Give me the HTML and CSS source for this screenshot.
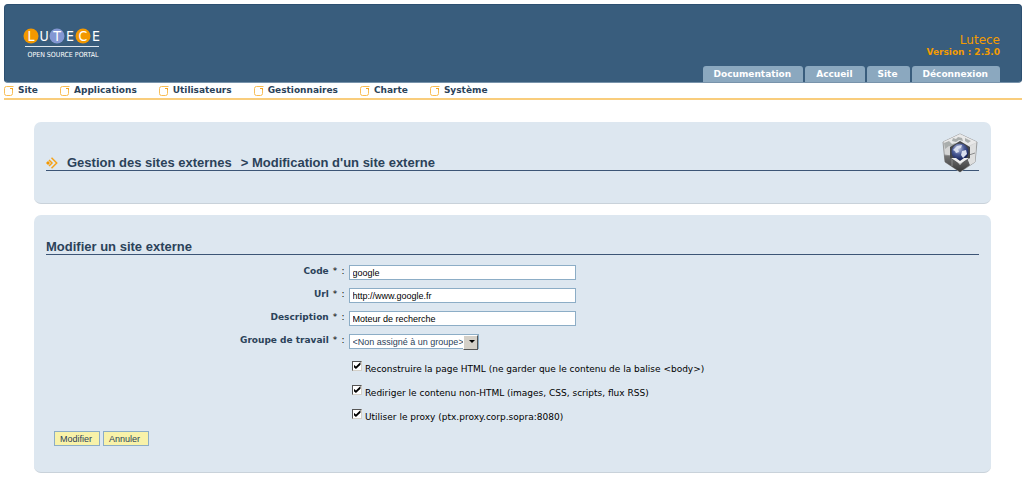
FILE: index.html
```
<!DOCTYPE html>
<html lang="fr">
<head>
  <meta charset="UTF-8">
  <title>Modification d'un site externe</title>
  <link rel="stylesheet" href="styles.css">
</head>
<body>

  <svg class="symbols" aria-hidden="true">
    <symbol id="bullet" viewBox="0 0 10 10">
      <path d="M8.500 4V7.500a2 2 0 0 1-2 2h-4a2 2 0 0 1-2-2v-5a2 2 0 0 1 2-2H9.500" fill="none" stroke="#f8bd55"/>
      <path d="M6 2h3v2H8V3H6z" fill="#f5a623"/>
    </symbol>
  </svg>

  <header class="header">
    <svg class="logo" width="78" height="32" viewBox="0 0 78 32" role="img" aria-label="Lutece Open Source Portal">
      <circle cx="8" cy="8" r="7.500" fill="#f39800"/>
      <circle cx="34" cy="8" r="7.500" fill="#8397d3"/>
      <circle cx="60" cy="8" r="7.500" fill="#f39800"/>
      <g class="logo-name">
        <text x="8" y="13">L</text>
        <text x="21" y="13">U</text>
        <text x="34" y="13">T</text>
        <text x="47" y="13">E</text>
        <text x="60" y="13">C</text>
        <text x="73" y="13">E</text>
      </g>
      <path d="M2 18.500H76" stroke="#dfe7ee"/>
      <text class="logo-tag" x="40" y="29">OPEN SOURCE PORTAL</text>
    </svg>
    <div class="header-right">
      <div class="product">Lutece</div>
      <div class="version">Version : 2.3.0</div>
      <nav class="tabs">
        <a href="#">Documentation</a>
        <a href="#">Accueil</a>
        <a href="#">Site</a>
        <a href="#">Déconnexion</a>
      </nav>
    </div>
  </header>

  <nav class="menu">
    <a href="#"><svg><use href="#bullet"/></svg>Site</a>
    <a href="#"><svg><use href="#bullet"/></svg>Applications</a>
    <a href="#"><svg><use href="#bullet"/></svg>Utilisateurs</a>
    <a href="#"><svg><use href="#bullet"/></svg>Gestionnaires</a>
    <a href="#"><svg><use href="#bullet"/></svg>Charte</a>
    <a href="#"><svg><use href="#bullet"/></svg>Système</a>
  </nav>

  <main>
    <section class="card card-title">
      <h1>
        <svg class="arrows" width="12" height="12" viewBox="0 0 12 12">
          <path d="M0 6l2-2 2 2-2 2z" fill="#f39800"/>
          <path d="M3 3l3 3-3 3M5.500 .8L10.700 6l-5.200 5.200" fill="none" stroke="#f5a31a" stroke-width="1.500"/>
        </svg>
        <a href="#">Gestion des sites externes</a>
        <span>&gt; Modification d'un site externe</span>
      </h1>
      <svg class="cube" width="38" height="42" viewBox="0 0 38 42">
        <defs>
          <linearGradient id="dark" x1="0" y1="0" x2="0" y2="1">
            <stop offset="0" stop-color="#777"/>
            <stop offset="1" stop-color="#383838"/>
          </linearGradient>
          <radialGradient id="globe" cx=".4" cy=".3" r=".7">
            <stop offset="0" stop-color="#c8cfe6"/>
            <stop offset=".5" stop-color="#4b5b96"/>
            <stop offset="1" stop-color="#141f55"/>
          </radialGradient>
        </defs>
        <path d="M19 1L36 9 34 29 19 39 4 29 2 9z" fill="#d4d5d5" stroke="#9b9c9d"/>
        <path d="M2 9L19 1 36 9 27 13 19 9 11 13z" fill="#e9e9e9"/>
        <path d="M12 5l3 1 2-2 4 1 1 3-4-1-3 2-4-1zM24 5l6 3-3 2-3-2zM3 10l5-2 3 3 4-1-3 4-4-1-4 3z" fill="#aaaead"/>
        <path d="M3 22l8 1 8 9 8-8 2 8L19 39 4 29z" fill="url(#dark)"/>
        <path d="M28 14l7-4-1 19-5 3-3-7 2-3z" fill="#dedfdf"/>
        <path d="M3 22l8 1M11 23v10M28 22l6-2" stroke="#8a8b8c" fill="none"/>
        <path d="M19 8l10 6v11l-10 6-10-6V14z" fill="#444549"/>
        <circle cx="19" cy="19" r="8.500" fill="url(#globe)"/>
        <path d="M12 17l4-4 5-1-1 3-3 1 1 3-3 1-1-2zM21 18l4-1 1 4-4 4-2-3z" fill="#d9deee"/>
        <path d="M10 25l5 0 4 3 4-3h5l-9 6z" fill="#eee"/>
      </svg>
    </section>

    <section class="card">
      <h2>Modifier un site externe</h2>
      <form onsubmit="return false">
        <div class="row">
          <label for="code">Code <span>*</span> <span>:</span></label>
          <input type="text" id="code" value="google">
        </div>
        <div class="row">
          <label for="url">Url <span>*</span> <span>:</span></label>
          <input type="text" id="url" value="http://www.google.fr">
        </div>
        <div class="row">
          <label for="description">Description <span>*</span> <span>:</span></label>
          <input type="text" id="description" value="Moteur de recherche">
        </div>
        <div class="row">
          <label for="workgroup">Groupe de travail <span>*</span> <span>:</span></label>
          <div class="select">
            <select id="workgroup">
              <option>&lt;Non assigné à un groupe&gt;</option>
            </select>
          </div>
        </div>
        <div class="checks">
          <div class="check">
            <input type="checkbox" id="rebuild" checked>
            <label for="rebuild">Reconstruire la page HTML (ne garder que le contenu de la balise &lt;body&gt;)</label>
          </div>
          <div class="check">
            <input type="checkbox" id="redirect" checked>
            <label for="redirect">Rediriger le contenu non-HTML (images, CSS, scripts, flux RSS)</label>
          </div>
          <div class="check">
            <input type="checkbox" id="proxy" checked>
            <label for="proxy">Utiliser le proxy (ptx.proxy.corp.sopra:8080)</label>
          </div>
        </div>
        <div class="buttons">
          <button type="submit">Modifier</button>
          <button type="button">Annuler</button>
        </div>
      </form>
    </section>
  </main>

</body>
</html>
```

FILE: styles.css
```
* {
  box-sizing: border-box;
}

body {
  margin: 0;
  padding: 4px 2px 4px 4px;
  background-color: #fff;
  color: #2b4259;
  font-family: Verdana, "DejaVu Sans", sans-serif;
  font-size: 9px;
}

a {
  color: inherit;
  text-decoration: none;
}

.symbols {
  display: none;
}

.header {
  display: flex;
  justify-content: space-between;
  align-items: flex-end;
  min-height: 79px;
  padding: 0 21px 0 18px;
  background-color: #395d7d;
  border: 1px solid #2d4f70;
  border-bottom-color: #7893ab;
  border-radius: 4px;
}

.logo {
  margin-bottom: 22px;
}

.logo text {
  fill: #fff;
  text-anchor: middle;
  font-family: "Liberation Sans Narrow", "DejaVu Sans Condensed", sans-serif;
}

.logo-name {
  font-size: 14px;
}

.logo .logo-tag {
  font-size: 7px;
}

.header-right {
  text-align: right;
  color: #f39c00;
}

.product {
  font-size: 12px;
  line-height: 14px;
}

.version {
  font-weight: bold;
  line-height: 10px;
}

.tabs {
  display: flex;
  gap: 2px;
  margin-top: 9px;
}

.tabs a {
  padding: 0 12px 0 11px;
  line-height: 16px;
  font-weight: bold;
  color: #fff;
  background-color: #8ba8bf;
  border-radius: 3px 3px 0 0;
}

.menu {
  display: flex;
  gap: 22px;
  border-bottom: 2px solid #f9cd7c;
}

.menu a {
  display: flex;
  align-items: center;
  gap: 4px;
  line-height: 15px;
  font-weight: bold;
}

.menu svg {
  width: 10px;
  height: 10px;
}

main {
  display: flex;
  flex-direction: column;
  gap: 11px;
  padding: 22px 31px 0 30px;
}

.card {
  padding: 24px 12px 26px;
  background-color: #dde7f0;
  border-bottom: 1px solid #c9d2da;
  border-radius: 7px;
}

.card-title {
  position: relative;
  padding: 32px 12px;
}

h1,
h2 {
  margin: 0;
  font-family: Arial, "Liberation Sans", sans-serif;
  font-size: 13px;
  line-height: 15px;
  border-bottom: 1px solid #3c5576;
}

h1 {
  display: flex;
  align-items: center;
  gap: 9px;
  padding-top: 1px;
}

/* hangs over the title rule */
.cube {
  position: absolute;
  top: 11px;
  right: 12px;
}

form {
  padding-top: 10px;
}

.row {
  display: grid;
  grid-template-columns: 32% 1fr;
  column-gap: 4px;
  height: 15px;
  margin-bottom: 8px;
}

.row label {
  text-align: right;
  font-weight: bold;
  line-height: 13px;
}

.row label span {
  margin-left: 1px;
  font-weight: normal;
  color: #000;
}

.row input,
.row select,
button {
  height: 15px;
  font-family: Arial, "Liberation Sans", sans-serif;
  font-size: 9px;
  border: 1px solid #8cadc6;
  border-radius: 0;
}

.row input {
  width: 227px;
  padding: 0 3px;
  background-color: #fff;
  color: #000;
}

.select {
  position: relative;
  width: 130px;
}

.row select {
  display: block;
  width: 100%;
  padding: 0 14px 0 3px;
  appearance: none;
  background-color: #fff;
  color: #2b4259;
}

/* drop-down button */
.select::before {
  content: "";
  position: absolute;
  top: 1px;
  right: 1px;
  width: 13px;
  height: 13px;
  background-color: #d4d0c8;
  border: 1px solid;
  border-color: #fff #555 #555 #fff;
  pointer-events: none;
}

.select::after {
  content: "";
  position: absolute;
  top: 6px;
  right: 4px;
  border: 3px solid transparent;
  border-top-color: #000;
  border-bottom: 0;
  pointer-events: none;
}

.checks {
  display: flex;
  flex-direction: column;
  gap: 10px;
  padding: 4px 0 0 306px;
  color: #000;
}

.check {
  display: flex;
  gap: 3px;
}

.check label {
  padding-top: 2px;
  line-height: 12px;
}

.check input {
  appearance: none;
  display: flex;
  justify-content: center;
  width: 10px;
  height: 10px;
  margin: 0;
  background-color: #fff;
  border: 1px solid;
  border-color: #555 #d4d0c8 #d4d0c8 #555;
}

.check input:checked::before {
  content: "";
  width: 7px;
  height: 7px;
  background-color: #000;
  clip-path: polygon(0 35%, 35% 65%, 100% 0, 100% 40%, 35% 100%, 0 70%);
}

.buttons {
  display: flex;
  gap: 3px;
  padding: 8px 8px 0;
}

button {
  min-width: 46px;
  padding: 0 5px;
  line-height: 12px;
  text-align: left;
  color: #2b4259;
  background-color: #f8f2a9;
}
```
